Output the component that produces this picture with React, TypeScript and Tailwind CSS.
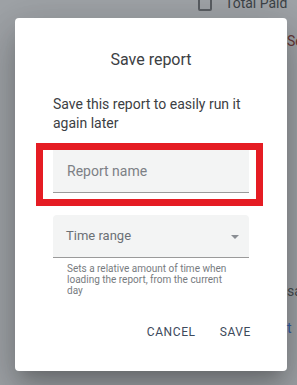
import React from 'react';

const App: React.FC = () => {
  return (
    <div className="relative w-[297px] h-[385px] overflow-hidden bg-[#9fa3a7] font-['Roboto','Liberation_Sans',sans-serif]">
      {/* page behind the overlay */}
      <div className="absolute left-[198px] -top-[7px] flex items-center gap-[13px] text-[14px] text-[#3a3f44]">
        <span className="w-[14px] h-[14px] border-2 border-[#55595e] rounded-[2px]"></span>
        <span>Total Paid</span>
      </div>
      <span className="absolute left-[287px] top-[31px] text-[14px] text-[#5a3030]">Ser</span>
      <span className="absolute left-[287px] top-[281px] text-[14px] text-[#3a3f44]">sa</span>
      <span className="absolute left-[287px] top-[318px] text-[14px] text-[#2a4f8a]">t</span>

      <div className="pt-[18px] pl-[15px]">
        <div className="w-[272px] h-[353px] bg-white rounded-[4px] shadow-[0_11px_15px_-7px_rgba(0,0,0,0.2),0_24px_38px_3px_rgba(0,0,0,0.14),0_9px_46px_8px_rgba(0,0,0,0.12)] px-[38px] pt-[30px] flex flex-col">
          <h2 className="text-center text-[16px] leading-[24px] text-[#3c4043]">Save report</h2>
          <p className="mt-[23px] text-[14px] leading-[19px] text-[#3c4043]">
            Save this report to easily run it again later
          </p>

          <div className="relative mt-[17px]">
            <div className="h-[43px] bg-[#f3f4f4] border-b border-[#9a9a9a] flex items-center px-[14px] text-[14px] text-[#7c8085]">
              Report name
            </div>
            <div className="absolute -left-[17px] -top-[7px] -right-[14px] -bottom-[13px] border-[7px] border-[#e51c23]"></div>
          </div>

          <div className="mt-[22px] h-[43px] bg-[#f3f4f4] rounded-t-[4px] border-b border-[#9a9a9a] flex items-center justify-between pl-[13px] pr-[10px] text-[13px] text-[#6b7075]">
            <span>Time range</span>
            <svg width="8" height="4" viewBox="0 0 8 4" className="mt-[1px]">
              <path d="M0 0 L8 0 L4 4 Z" fill="#8a8e93" />
            </svg>
          </div>
          <p className="mt-[5px] px-[14px] text-[10px] leading-[11px] text-[#777b80]">
            Sets a relative amount of time when loading the report, from the current day
          </p>

          <div className="mt-auto mb-[30px] flex justify-end items-center gap-[24px] text-[12px] tracking-[0.6px] text-[#3d4a5c] font-normal">
            <button className="uppercase">Cancel</button>
            <button className="uppercase mr-[-2px]">Save</button>
          </div>
        </div>
      </div>
    </div>
  );
};

export default App;
